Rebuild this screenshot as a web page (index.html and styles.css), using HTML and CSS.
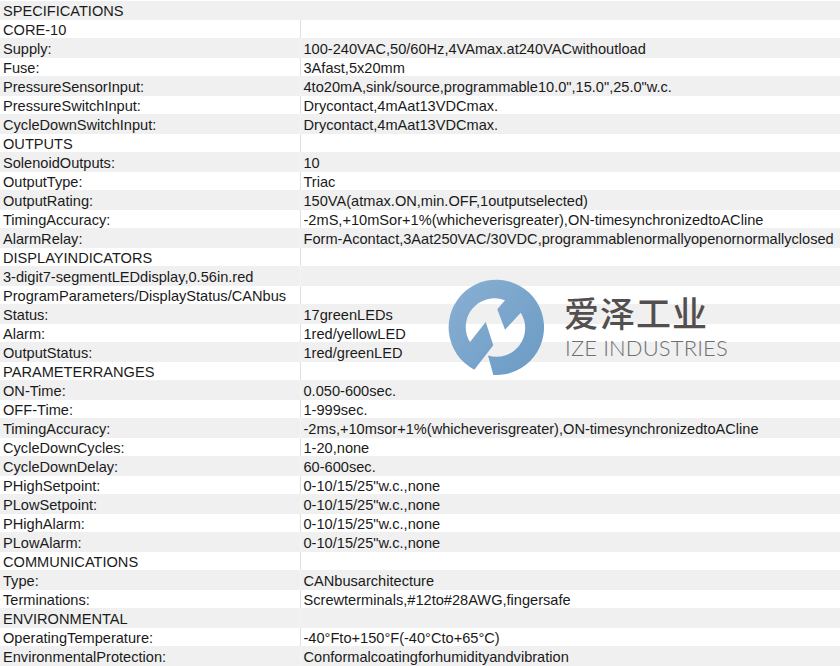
FILE: index.html
```html
<!DOCTYPE html>
<html lang="en">
<head>
<meta charset="utf-8">
<title>Specifications</title>
<link rel="stylesheet" href="styles.css">
</head>
<body>
<table class="spec">
<colgroup><col class="col-label"><col class="col-value"></colgroup>
<tr><td colspan="2">SPECIFICATIONS</td></tr>
<tr><td>CORE-10</td><td></td></tr>
<tr><td>Supply:</td><td>100-240VAC,50/60Hz,4VAmax.at240VACwithoutload</td></tr>
<tr><td>Fuse:</td><td>3Afast,5x20mm</td></tr>
<tr><td>PressureSensorInput:</td><td>4to20mA,sink/source,programmable10.0",15.0",25.0"w.c.</td></tr>
<tr><td>PressureSwitchInput:</td><td>Drycontact,4mAat13VDCmax.</td></tr>
<tr><td>CycleDownSwitchInput:</td><td>Drycontact,4mAat13VDCmax.</td></tr>
<tr><td>OUTPUTS</td><td></td></tr>
<tr><td>SolenoidOutputs:</td><td>10</td></tr>
<tr><td>OutputType:</td><td>Triac</td></tr>
<tr><td>OutputRating:</td><td>150VA(atmax.ON,min.OFF,1outputselected)</td></tr>
<tr><td>TimingAccuracy:</td><td>-2mS,+10mSor+1%(whicheverisgreater),ON-timesynchronizedtoACline</td></tr>
<tr><td>AlarmRelay:</td><td>Form-Acontact,3Aat250VAC/30VDC,programmablenormallyopenornormallyclosed</td></tr>
<tr><td>DISPLAYINDICATORS</td><td></td></tr>
<tr><td>3-digit7-segmentLEDdisplay,0.56in.red</td><td></td></tr>
<tr><td>ProgramParameters/DisplayStatus/CANbus</td><td></td></tr>
<tr><td>Status:</td><td>17greenLEDs</td></tr>
<tr><td>Alarm:</td><td>1red/yellowLED</td></tr>
<tr><td>OutputStatus:</td><td>1red/greenLED</td></tr>
<tr><td>PARAMETERRANGES</td><td></td></tr>
<tr><td>ON-Time:</td><td>0.050-600sec.</td></tr>
<tr><td>OFF-Time:</td><td>1-999sec.</td></tr>
<tr><td>TimingAccuracy:</td><td>-2ms,+10msor+1%(whicheverisgreater),ON-timesynchronizedtoACline</td></tr>
<tr><td>CycleDownCycles:</td><td>1-20,none</td></tr>
<tr><td>CycleDownDelay:</td><td>60-600sec.</td></tr>
<tr><td>PHighSetpoint:</td><td>0-10/15/25"w.c.,none</td></tr>
<tr><td>PLowSetpoint:</td><td>0-10/15/25"w.c.,none</td></tr>
<tr><td>PHighAlarm:</td><td>0-10/15/25"w.c.,none</td></tr>
<tr><td>PLowAlarm:</td><td>0-10/15/25"w.c.,none</td></tr>
<tr><td>COMMUNICATIONS</td><td></td></tr>
<tr><td>Type:</td><td>CANbusarchitecture</td></tr>
<tr><td>Terminations:</td><td>Screwterminals,#12to#28AWG,fingersafe</td></tr>
<tr><td>ENVIRONMENTAL</td><td></td></tr>
<tr><td>OperatingTemperature:</td><td>-40°Fto+150°F(-40°Cto+65°C)</td></tr>
<tr><td>EnvironmentalProtection:</td><td>Conformalcoatingforhumidityandvibration</td></tr>
</table>
<div class="logo">
<svg class="logo-mark" viewBox="0 0 104 100" width="104" height="100" aria-hidden="true">
<defs><linearGradient id="g" x1="0" y1="0" x2="1" y2="1"><stop offset="0" stop-color="#8ab0d3"/><stop offset="1" stop-color="#6a9ac4"/></linearGradient></defs>
<path fill="url(#g)" d="M29.3 92.7 A47.7 47.7 0 1 1 48.3 98 L43 78.5 A28.7 28.7 0 0 0 75.7 35.7 L60 52.7 L52.3 32.3 L60 23.3 A28.7 28.7 0 0 0 25 65 L40.7 45 L48.3 68.3 Z"/>
</svg>
<div class="logo-text"><div class="logo-cn">爱泽工业</div><div class="logo-en">IZE INDUSTRIES</div></div>
</div>
</body>
</html>
```
FILE: styles.css
```css
html, body { margin: 0; padding: 0; background: #fff; }
body { width: 840px; height: 666px; overflow: hidden; position: relative; }
.spec { border-collapse: collapse; table-layout: fixed; width: 840px; font: 14.6px/16px "Liberation Sans", Arial, sans-serif; color: #1a1a1a; }
.col-label { width: 300px; }
.spec tr:nth-child(odd) { background: #f0f0f0; }
.spec tr:nth-child(odd) td { height: 20px; }
.spec tr:nth-child(even) td { height: 18px; }
.spec td { padding: 2px 0 0 3px; white-space: nowrap; box-sizing: border-box; }
.spec tr:first-child td { box-shadow: inset 0 1px #fff; }
.spec tr:nth-child(even) td + td { border-left: 1px solid #e0e0e0; }
.spec tr:nth-child(odd) td + td { border-left: 1px solid #f4f4f4; }
.logo { position: absolute; left: 445px; top: 277px; display: flex; align-items: flex-start; gap: 15px; }
.logo-mark { flex: none; display: block; }
.logo-text { margin-top: 15px; }
.logo-cn { font: 500 35px/40px "Noto Sans CJK SC", sans-serif; letter-spacing: 1px; color: #534f4e; }
.logo-en { font: 300 22px/26px Lato, sans-serif; letter-spacing: .15px; color: #6f6f72; margin-top: 3px; margin-left: 1px; }
```
